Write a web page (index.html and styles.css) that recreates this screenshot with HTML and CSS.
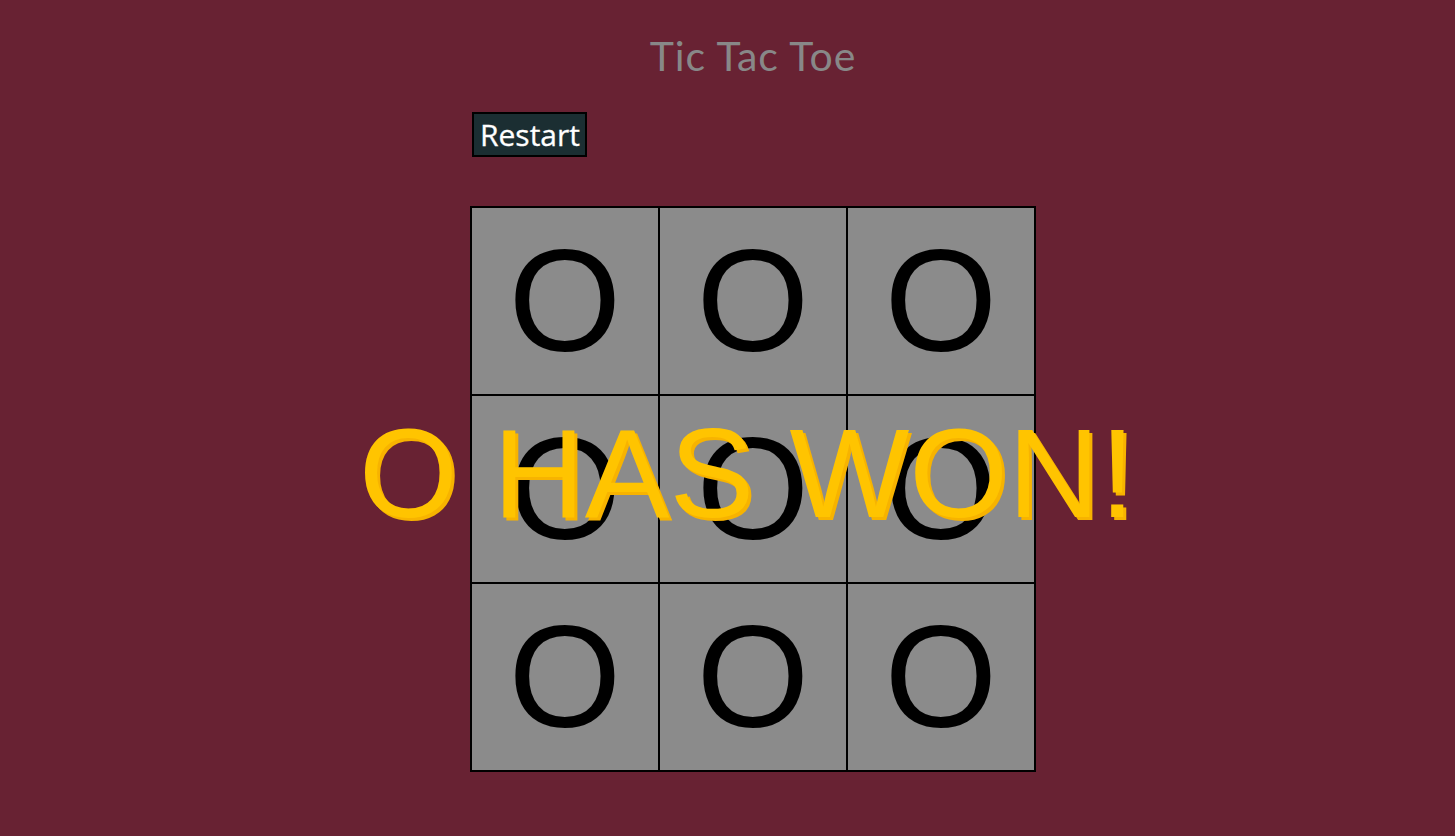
FILE: index.html
```html
<!DOCTYPE html>
<html lang="en">
<head>
<meta charset="utf-8">
<title>Tic Tac Toe</title>
<link rel="stylesheet" href="styles.css">
</head>
<body>
<main class="page">
  <h1 class="title">Tic Tac Toe</h1>
  <section class="game">
    <div class="controls">
      <button class="restart" type="button">Restart</button>
    </div>
    <div class="board-wrap">
      <div class="board">
        <div class="cell">O</div>
        <div class="cell">O</div>
        <div class="cell">O</div>
        <div class="cell">O</div>
        <div class="cell">O</div>
        <div class="cell">O</div>
        <div class="cell">O</div>
        <div class="cell">O</div>
        <div class="cell">O</div>
      </div>
      <div class="winner">O HAS WON!</div>
    </div>
  </section>
</main>
</body>
</html>
```

FILE: styles.css
```css
html, body {
  margin: 0;
  padding: 0;
}

body {
  background: #682233;
  min-height: 836px;
}

.page {
  display: flex;
  flex-direction: column;
  align-items: center;
  padding-left: 51px;
}

.title {
  margin: 31px 0 0 0;
  font-family: "Lato", "Liberation Sans", sans-serif;
  font-weight: 400;
  font-size: 41px;
  letter-spacing: 1px;
  line-height: normal;
  color: #888888;
}

.game {
  width: 566px;
  display: flex;
  flex-direction: column;
}

.controls {
  margin-top: 32px;
  padding-left: 2px;
  display: flex;
}

.restart {
  margin: 0;
  padding: 0 5px 0 6px;
  height: 45px;
  background: #1b2e32;
  color: #ffffff;
  border: 2px solid #000000;
  border-radius: 0;
  font-family: "Open Sans", "Noto Sans", sans-serif;
  font-size: 30px;
  line-height: normal;
  -webkit-text-stroke: 0.3px #ffffff;
}

.board-wrap {
  position: relative;
  margin-top: 49px;
}

.board {
  display: grid;
  grid-template-columns: repeat(3, 188px);
  grid-auto-rows: 188px;
  border: 1px solid #000000;
  width: 564px;
}

.cell {
  border: 1px solid #000000;
  background: #8b8b8b;
  display: flex;
  align-items: center;
  justify-content: center;
  font-family: "Liberation Sans", Arial, sans-serif;
  font-size: 145px;
  line-height: normal;
  color: #000000;
}

.winner {
  position: absolute;
  top: 204px;
  left: -100px;
  right: -100px;
  display: flex;
  justify-content: center;
  padding-right: 12px;
  white-space: nowrap;
  font-family: "Liberation Sans", Arial, sans-serif;
  font-size: 127px;
  line-height: 1;
  color: #ffc400;
  text-shadow: 3px 3px 0 #f7b300;
  pointer-events: none;
}
```
